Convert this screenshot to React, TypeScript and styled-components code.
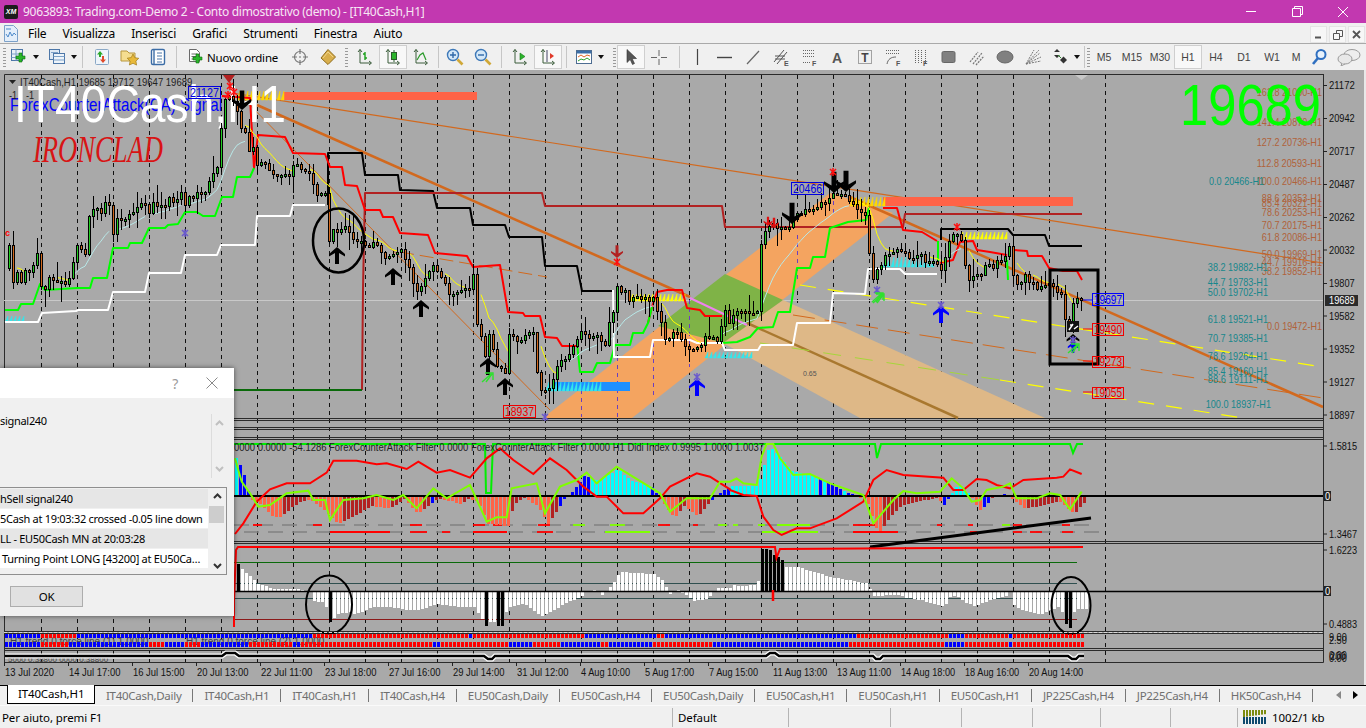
import React from "react";
import styled, { createGlobalStyle } from "styled-components";

const Global = createGlobalStyle`
  html, body { margin: 0; padding: 0; width: 1366px; height: 728px; overflow: hidden; background: #f0f0f0; }
  body { font-family: "Noto Sans", "Liberation Sans", sans-serif; font-size: 12px; color: #000; }
`;
const CH = `"Liberation Sans", Arial, sans-serif`;

const Shell = styled.div`position: relative; width: 1366px; height: 728px; display: flex; flex-direction: column; overflow: hidden;`;
const TitleBar = styled.div`height: 23px; background: #c238b0; display: flex; align-items: center; color: #fff; flex: none;`;
const Logo = styled.div`width: 14px; height: 14px; margin: 0 5px 0 4px; background: #1c1c1c; border-radius: 2px; color: #fff; font: italic bold 7px/14px ${CH}; text-align: center;`;
const TitleText = styled.div`font-size: 12px; letter-spacing: -0.3px; color: #f7e6f4; flex: 1; white-space: nowrap;`;
const WinBtn = styled.div`width: 46px; height: 23px; display: flex; align-items: center; justify-content: center;`;
const MenuBar = styled.div`height: 20px; background: #f0f0f0; display: flex; align-items: center; flex: none; padding-left: 4px; position: relative;`;
const MenuItems = styled.div`display: flex; gap: 16.2px; margin-left: 10px; font-size: 12px; letter-spacing: -0.2px; flex: 1;`;
const MdiBtns = styled.div`display: flex; gap: 2px; margin-right: 1px; align-self: flex-end;`;
const MdiBtn = styled.div`width: 17px; height: 17px; background: #f7f7f7; border: 1px solid #e4e4e4; box-sizing: border-box; display: flex; align-items: center; justify-content: center;`;
const ToolBar = styled.div`height: 27px; background: #f0f0f0; border-top: 1px solid #a9a9a9; box-sizing: border-box; display: flex; align-items: center; padding-left: 3px; flex: none;`;
const Grip = styled.div<{ $ml?: number }>`width: 3px; height: 19px; margin-left: ${p => p.$ml ?? 0}px; background: repeating-linear-gradient(to bottom, #9a9a9a 0 1px, transparent 1px 3px);`;
const Sep = styled.div<{ $ml: number; $mr: number }>`width: 1px; height: 22px; background: #c6c6c6; margin: 0 ${p => p.$mr}px 0 ${p => p.$ml}px;`;
const Tool = styled.div<{ $w: number; $active?: boolean; $ml?: number }>`
  width: ${p => p.$w}px; height: 24px; margin-left: ${p => p.$ml ?? 0}px; box-sizing: border-box; flex: none;
  display: flex; align-items: center; justify-content: center; gap: 5px; white-space: nowrap;
  border: 1px solid ${p => (p.$active ? "#cfcfcf" : "transparent")};
  background: ${p => (p.$active ? "#f8f8f8" : "transparent")};
`;
const OrderBtn = styled(Tool)`justify-content: flex-start; padding-left: 1px; gap: 2px; font-size: 11.5px; letter-spacing: -0.2px;`;
const Period = styled(Tool)`font: 10.5px ${CH}; color: #444;`;
const Caret = styled.div`width: 0; height: 0; border: 3.5px solid transparent; border-top: 4px solid #111; border-bottom: 0;`;

const ChartArea = styled.div`height: 615px; background: #a9a9a9; flex: none; border-right: 2px solid #e8e8e8; box-sizing: border-box;`;
const ChartSvg = styled.svg`display: block; width: 1364px; height: 615px;`;

const TabBar = styled.div`height: 21px; border-top: 1px solid #000; box-sizing: border-box; background: #f0f0f0; display: flex; align-items: center; padding-left: 7px; flex: none; position: relative; font-size: 11.5px; border-bottom: 1px solid #fafafa;`;
const ActiveTab = styled.div`height: 19px; margin-top: -1px; align-self: flex-start; box-sizing: border-box; padding: 0 10px; width: 88px; background: #fff; border: 1px solid #000; border-top: 0; line-height: 17px; white-space: nowrap; letter-spacing: -0.15px;`;
const Tab = styled.div`padding: 0 11px; height: 13px; line-height: 13px; color: #6f6f6f; border-right: 1px solid #777; letter-spacing: -0.29px; white-space: nowrap;`;
const TabArrows = styled.div`position: absolute; right: 8px; top: 5px; display: flex; gap: 12px;`;
const TabArrow = styled.div<{ $dir: string; $on?: boolean }>`width: 0; height: 0; border: 4px solid transparent; border-${p => p.$dir}: 0; border-${p => (p.$dir === "left" ? "right" : "left")}: 5px solid ${p => (p.$on ? "#000" : "#888")};`;

const StatusBar = styled.div`height: 22px; background: #f0f0f0; display: flex; align-items: center; flex: none; font-size: 11.5px; letter-spacing: -0.1px;`;
const Cell = styled.div<{ $w: number }>`width: ${p => p.$w}px; height: 19px; line-height: 19px; padding-left: 5px; box-sizing: border-box; flex: none; border-left: 1px solid #b4b4b4; white-space: nowrap; display: flex; align-items: center; gap: 5px;`;
const HelpCell = styled(Cell)`border-left: 0; padding-left: 2px;`;

const Dialog = styled.div`position: absolute; left: 0; top: 368px; width: 234px; height: 248px; background: #f0f0f0; box-shadow: 0 0 5px rgba(0,0,0,.55); font-size: 11px; letter-spacing: -0.3px; overflow: hidden; display: flex; flex-direction: column;`;
const DlgTitle = styled.div`height: 30px; background: #fff; color: #8c8c8c; display: flex; justify-content: flex-end; align-items: center; flex: none; gap: 28px; padding-right: 16px;`;
const QMark = styled.div`font-size: 14px; color: #9a9a9a;`;
const DlgText = styled.div`height: 65px; margin-top: 16px; display: flex; justify-content: space-between; flex: none; box-sizing: border-box; line-height: 14px;`;
const MiniScroll = styled.div`width: 23px; border-left: 1px solid #dcdcdc; display: flex; flex-direction: column; justify-content: space-between; align-items: center; padding: 6px 8px 6px 0; box-sizing: border-box; height: 64px;`;
const ListBox = styled.div`margin-top: 8px; width: 227px; height: 88px; box-sizing: border-box; border: 1px solid #8f8f8f; border-left: 0; background: #f0f0f0; display: flex; flex: none;`;
const Rows = styled.div`width: 208px; padding-top: 1px; overflow: hidden;`;
const Row = styled.div<{ $alt?: boolean; $shift?: number }>`height: 19px; margin-bottom: 1px; line-height: 19px; padding-left: ${p => p.$shift ?? 0}px; white-space: nowrap; background: ${p => (p.$alt ? "#e6e6e6" : "#fff")}; overflow: hidden;`;
const ListScroll = styled.div`flex: 1; display: flex; flex-direction: column; align-items: center; justify-content: space-between; padding: 5px 0; box-sizing: border-box; position: relative;`;
const Thumb = styled.div`position: absolute; left: 1px; right: 2px; top: 18px; height: 17px; background: #cdcdcd;`;
const OkButton = styled.div`margin: 11px 0 0 10px; width: 73px; height: 21px; line-height: 19px; box-sizing: border-box; background: #e1e1e1; border: 1px solid #adadad; text-align: center; font-size: 11.5px;`;

/* ---------- data helpers ---------- */
type P = [number, number];
const lerp = (pts: P[], x: number) => {
  if (x <= pts[0][0]) return pts[0][1];
  for (let i = 1; i < pts.length; i++) {
    if (x <= pts[i][0]) {
      const [a, b] = pts[i - 1];
      const [c, d] = pts[i];
      return b + ((d - b) * (x - a)) / (c - a || 1);
    }
  }
  return pts[pts.length - 1][1];
};
let seed = 91;
const rnd = () => {
  seed = (seed * 1664525 + 1013904223) % 4294967296;
  return seed / 4294967296;
};
const pl = (pts: P[]) => pts.map(p => p.join(",")).join(" ");
const zoom = (ox: number, oy: number, arr: P[]): P[] => arr.map(([a, b]) => [ox + a / 3, oy + b / 3]);

const K: P[] = [[5,270],[9,245],[13,285],[17,275],[21,285],[25,270],[29,272],[33,268],[37,252],[41,285],[45,292],[49,280],[53,280],[57,282],[61,280],[65,282],[69,278],[77,245],[81,250],[85,255],[89,215],[93,210],[97,207],[101,212],[105,203],[109,205],[113,235],[117,220],[121,222],[125,218],[133,215],[137,207],[141,205],[145,204],[149,213],[153,200],[157,205],[161,203],[165,204],[169,200],[173,202],[177,200],[181,195],[185,208],[189,198],[193,196],[197,193],[201,193],[205,192],[212,175],[218,165],[221,130],[225,102],[229,98],[233,100],[238,112],[241,130],[245,135],[249,150],[253,150],[257,165],[265,165],[270,172],[280,178],[290,175],[295,160],[302,170],[310,175],[315,195],[325,195],[329,240],[333,228],[337,232],[345,228],[350,235],[355,242],[365,245],[375,245],[385,260],[392,255],[400,250],[405,258],[410,268],[414,285],[418,295],[422,283],[433,267],[442,280],[450,295],[457,295],[470,288],[473,273],[477,322],[481,336],[485,355],[489,337],[493,352],[497,368],[505,372],[509,335],[517,340],[525,335],[533,333],[537,370],[541,392],[549,390],[553,378],[561,360],[569,355],[581,330],[589,340],[597,336],[605,345],[610,320],[613,313],[617,288],[621,295],[625,293],[630,300],[640,297],[645,300],[653,298],[657,310],[665,338],[669,340],[673,330],[681,340],[689,352],[697,347],[709,335],[717,340],[725,310],[729,322],[733,315],[741,312],[749,311],[757,312],[761,245],[765,232],[773,225],[781,228],[789,228],[797,215],[805,212],[817,205],[825,203],[833,195],[841,196],[849,200],[855,205],[865,215],[869,255],[873,277],[877,268],[881,264],[885,258],[889,253],[897,252],[905,252],[909,257],[913,259],[917,256],[921,257],[925,262],[937,263],[941,272],[945,257],[949,241],[953,234],[957,235],[961,243],[965,267],[969,279],[973,278],[977,276],[981,275],[985,263],[989,265],[993,266],[997,263],[1001,260],[1005,257],[1009,246],[1013,275],[1017,282],[1021,285],[1025,276],[1029,285],[1033,285],[1037,290],[1041,288],[1045,286],[1053,285],[1057,290],[1061,297],[1065,317],[1069,325],[1073,303],[1077,301],[1081,299]];

const closes: { x: number; c: number }[] = [];
for (let x = 5; x <= 1081; x += 4) closes.push({ x, c: lerp(K, x) + (rnd() - 0.5) * 5.5 });

const ema = (n: number) => {
  const a = 2 / (n + 1);
  let v = closes[0].c;
  return closes.map(d => (v = v + a * (d.c - v)));
};
const fast = ema(7);
const slow = ema(13);
const segs = (vals: number[], test: (v: number, c: number) => boolean, shift: number) => {
  const out: string[] = [];
  let cur: string[] = [];
  vals.forEach((v, i) => {
    const c = closes[i].c;
    if (test(v, c)) cur.push(`${closes[i].x + shift},${v.toFixed(1)}`);
    else {
      if (cur.length > 2) out.push(cur.join(" "));
      cur = [];
    }
  });
  if (cur.length > 2) out.push(cur.join(" "));
  return out;
};

const WHITE: P[][] = [
  [[5,322],[38,322],[42,313],[76,311],[78,310],[108,310],[113,292],[145,292],[149,273],[181,273],[185,255],[217,255],[221,245],[255,245],[257,216],[290,216],[293,205],[325,205]],
  [[613,290],[614,357],[650,357],[653,340],[690,340],[697,343],[722,343],[725,350],[758,350],[761,345],[793,345],[797,323],[830,323],[833,293],[865,294],[868,269],[900,269],[905,274],[937,274]],
];
const GREEN: P[][] = [
  [[5,310],[18,310],[21,304],[33,304],[40,284],[45,290],[77,288],[90,288],[93,278],[107,278],[113,248],[128,248],[130,243],[142,243],[149,228],[165,228],[168,225],[178,224],[185,212],[197,212],[203,216],[215,216],[222,197],[233,197],[237,177],[250,177],[254,168]],
  [[577,343],[580,372],[593,372],[597,363],[610,363],[615,345],[630,345],[633,333],[643,333],[648,323],[652,307]],
  [[722,343],[737,342],[750,337],[758,328],[773,327],[778,312],[790,312],[797,268],[810,268],[813,257],[825,257],[830,228],[848,222],[866,220],[869,207]],
  [[938,241],[938,263]],[[1007,260],[1008,280]],
];
const RED: P[][] = [
  [[222,96],[250,98],[254,168],[258,135],[285,137],[293,153],[325,154],[330,167],[342,167],[345,185],[357,186],[365,210],[380,210],[383,217],[393,217],[400,233],[428,235],[435,253],[467,256],[473,267],[500,265],[508,312],[523,313],[525,316],[540,316],[545,337],[557,338],[562,346],[577,346]],
  [[648,323],[652,307],[657,292],[667,290],[682,290],[687,308],[700,310],[705,316],[722,316]],
  [[883,208],[897,208],[903,230],[922,232],[937,241]],[[940,263],[953,260],[960,242],[973,241],[977,250],[990,252],[1007,255]],[[1013,250],[1027,251],[1028,256],[1042,256],[1049,268],[1063,271],[1077,271],[1082,280]],
];
const BLACK: P[][] = [
  [[328,205],[328,153],[362,153],[365,175],[398,175],[400,190],[433,191],[437,208],[470,208],[473,225],[505,225],[509,237],[542,237],[545,266],[577,266],[582,291],[613,291]],
  [[941,240],[941,229],[1008,229],[1013,235],[1045,235],[1049,246],[1082,246]],
];
const DRED: P[] = [[362,390],[363,288],[365,193],[542,193],[545,206],[722,206],[725,227],[903,227],[905,214],[1082,214]];

const HIST1: P[] = [[235,38],[242,25],[245,12],[248,2],[250,-3],[260,-8],[270,-20],[278,-22],[290,-12],[300,-5],[310,-4],[318,-10],[327,-18],[337,-28],[343,-25],[357,-18],[370,-10],[387,-12],[393,-10],[403,-3],[417,-18],[430,-8],[437,-3],[450,-5],[460,-8],[467,-3],[477,-5],[487,-28],[507,-30],[513,-8],[523,-2],[537,-10],[547,-28],[558,-12],[563,-3],[573,6],[583,20],[597,15],[617,27],[630,15],[650,10],[657,0],[673,-22],[683,-10],[697,-20],[710,-5],[720,4],[730,10],[757,10],[760,20],[768,50],[778,40],[790,25],[810,20],[827,14],[843,5],[853,1],[860,-3],[867,-8],[877,-38],[890,-20],[900,-10],[917,-5],[937,-2],[942,-10],[945,-6],[957,12],[970,0],[978,-15],[987,-7],[993,0],[1005,3],[1017,-8],[1023,-12],[1040,-10],[1058,-5],[1073,-18],[1082,-7]];
const BLUE_RANGES: P[] = [[238,248],[431,434],[559,564],[571,585],[587,590],[652,656],[711,728],[819,823],[827,832],[835,840],[846,852],[943,948],[984,988],[1001,1005]];
const H1RED = [...zoom(230,430,[[15,312],[40,280],[80,215],[120,178],[170,160],[240,160],[290,128],[310,92],[380,92],[440,103],[470,100],[530,117],[565,95],[620,128],[660,120],[720,143],[770,85],[810,55],[850,90],[910,132],[960,85],[1010,120],[1060,170],[1100,200],[1130,200],[1180,250],[1240,250],[1290,205],[1320,170],[1400,130],[1440,140],[1500,178]]),
  ...zoom(730,430,[[0,180],[40,195],[80,198],[100,260],[130,300],[155,315],[200,295],[240,295],[320,265],[400,215],[430,150],[470,120],[520,135],[640,143],[670,180],[700,180],[740,147],[770,150],[800,165],[840,175],[880,150],[980,143],[1000,140],[1020,118],[1055,132]])];
const H1LIME = [...zoom(230,430,[[15,85],[35,155],[60,190],[85,230],[120,225],[170,190],[235,182],[250,210],[285,210],[300,270],[340,210],[400,205],[440,195],[490,210],[520,195],[560,235],[610,175],[650,205],[720,165],[770,275],[800,262],[830,262],[845,175],[920,160],[945,250],[990,170],[1040,150],[1070,128],[1100,160],[1160,110],[1290,190],[1320,245],[1370,205],[1440,205],[1470,155],[1500,155]]),
  ...zoom(730,430,[[0,155],[20,145],[40,160],[80,165],[95,80],[110,42],[130,42],[150,85],[190,135],[240,132],[300,160],[400,195],[430,280],[490,210],[520,183],[560,190],[630,185],[665,145],[700,175],[725,215],[750,210],[770,180],[820,170],[840,160],[860,205],[920,205],[960,190],[990,195],[1020,238],[1055,185]])];

const HIST2: P[] = [...zoom(230,0,[[15,90],[40,60],[60,45],[80,24],[110,18],[120,9],[200,9],[240,0],[250,-30],[280,-30],[300,-90],[320,-66],[360,-60],[370,-66],[390,-60],[420,-45],[480,-45],[530,-54],[560,-54],[620,-36],[680,-45],[730,-45],[760,-90],[800,-90],[815,-90],[830,-45],[880,-36],[930,-72],[960,-60],[1010,-30],[1050,-15],[1060,0],[1075,3],[1090,6],[1115,-9],[1130,9],[1150,30],[1165,60],[1270,54],[1300,30],[1310,0],[1320,-9],[1335,12],[1350,0],[1390,-27],[1430,-21],[1460,12],[1500,12]]),
  ...zoom(730,0,[[0,24],[20,18],[80,21],[90,129],[105,129],[118,126],[130,111],[155,96],[165,75],[200,75],[300,45],[400,27],[410,27],[425,-12],[500,-9],[530,-18],[570,-24],[640,-45],[660,-9],[680,-15],[700,-30],[730,-42],[760,-30],[780,-24],[830,-9],[840,6],[850,-45],[890,-60],[930,-66],[980,-45],[1000,-66],[1005,-96],[1018,-108],[1030,-54],[1045,-51]])];
const BLACKBARS = [237, 329, 485, 497, 501, 761, 765, 769, 773, 777, 781, 1065, 1069];

const ROW1: [number, number, string][] = [[5,41,"b"],[41,77,"r"],[77,311,"b"],[311,469,"r"],[469,473,"b"],[473,584,"r"],[584,654,"b"],[654,664,"r"],[664,855,"b"],[855,947,"r"],[947,963,"b"],[963,1008,"r"],[1008,1012,"b"],[1012,1084,"r"]];
const ROW2: [number, number, string][] = [[5,41,"b"],[41,68,"r"],[68,147,"b"],[147,165,"r"],[165,184,"b"],[184,199,"r"],[199,248,"b"],[248,292,"r"],[292,299,"b"],[299,432,"r"],[432,438,"b"],[438,507,"r"],[507,532,"b"],[532,559,"r"],[559,599,"b"],[599,607,"r"],[607,650,"b"],[650,712,"r"],[712,848,"b"],[848,943,"r"],[943,964,"b"],[964,1008,"r"],[1008,1012,"b"],[1012,1084,"r"]];
const rowColor = (row: [number, number, string][], x: number) => (row.find(r => x >= r[0] && x < r[1])?.[2] === "b" ? "#0000ff" : "#ff0000");

const GRID = [41,77,113,149,185,221,257,293,329,365,401,437,473,509,545,581,617,653,689,725,761,797,833,869,905,941,977,1013,1049,1105];
const AXIS: [string, number][] = [["21172",85.5],["20942",118.5],["20717",151.5],["20487",184.5],["20262",217.5],["20032",250],["19807",283.5],["19582",316],["19352",349],["19127",382],["18897",415]];
const TIMES: [string, number][] = [["13 Jul 2020",5],["14 Jul 17:00",69],["16 Jul 15:00",133],["20 Jul 13:00",197],["22 Jul 11:00",261],["23 Jul 18:00",325],["27 Jul 16:00",389],["29 Jul 14:00",453],["31 Jul 12:00",517],["4 Aug 10:00",581],["5 Aug 17:00",645],["7 Aug 15:00",709],["11 Aug 13:00",773],["13 Aug 11:00",837],["14 Aug 18:00",901],["18 Aug 16:00",965],["20 Aug 14:00",1029]];
const FIB_R: [string, number][] = [["161.8 21090-H1",92],["141.4 20870-H1",122],["127.2 20736-H1",142],["112.8 20593-H1",163],["100.0 20466-H1",181],["88.6 20353-H1",198],["85.4 20321-H1",203],["78.6 20253-H1",212],["70.7 20175-H1",225],["61.8 20086-H1",237.5],["50.0 19969-H1",254],["44.7 19916-H1",262],["38.2 19852-H1",271.6],["0.0 19472-H1",326]];
const FIB_L: [string, number, number][] = [["0.0 20466-H1",181,1264],["38.2 19882-H1",267,1268],["44.7 19783-H1",282,1268],["50.0 19702-H1",292.6,1268],["61.8 19521-H1",319.5,1268],["70.7 19385-H1",338,1268],["78.6 19264-H1",356.6,1268],["85.4 19160-H1",371,1268],["88.6 19111-H1",379,1268],["100.0 18937-H1",404,1271]];

const tw = (s: string) => {
  let w = 0;
  for (const c of s) {
    if (/[0-9]/.test(c)) w += 5.15;
    else if (c === "." || c === ":" || c === ",") w += 2.3;
    else if (c === " ") w += 2.5;
    else if (c === "-") w += 3;
    else if (/[A-Z]/.test(c)) w += 6;
    else if (c === "l" || c === "i") w += 2.2;
    else w += 5;
  }
  return w;
};

const T: React.FC<{ x: number; y: number; s: string; fill?: string; anchor?: string }> = ({ x, y, s, fill = "#111", anchor }) => (
  <text x={x} y={y + 3.5} fontSize={10.4} fontFamily={CH} fill={fill} textAnchor={anchor as any} textLength={tw(s)} lengthAdjust="spacingAndGlyphs">{s}</text>
);
const Hatch: React.FC<{ x: number; y: number; w: number; h: number; c: string }> = ({ x, y, w, h, c }) => {
  let d = "";
  for (let i = x; i < x + w; i += 4) d += `M${i} ${y + h}L${i + 3} ${y}L${i + 3} ${y + h}Z`;
  return <path d={d} fill={c} stroke={c} strokeWidth={0.5} />;
};
const UpArrow: React.FC<{ x: number; y: number; c?: string; s?: number; down?: boolean }> = ({ x, y, c = "#000", s = 1, down }) => (
  <g transform={`translate(${x} ${y}) scale(${s} ${down ? -s : s})`} fill={c}>
    <path d="M0 0 L8 7 L8 9.5 L2 6 L2 17 L-2 17 L-2 6 L-8 9.5 L-8 7 Z" />
  </g>
);
const Star: React.FC<{ x: number; y: number; c?: string }> = ({ x, y, c = "#6a5acd" }) => (
  <path d={`M${x - 3} ${y - 3}L${x + 3} ${y + 3}M${x + 3} ${y - 3}L${x - 3} ${y + 3}M${x} ${y - 4}V${y + 4}`} stroke={c} strokeWidth={1.5} />
);
const GreenArrow: React.FC<{ x: number; y: number }> = ({ x, y }) => (
  <path d={`M${x - 5} ${y + 6}L${x + 4} ${y - 2}M${x - 1} ${y + 6}L${x + 5} ${y - 2}M${x - 2} ${y - 3}H${x + 6}V${y + 4}`} stroke="#2fe02f" strokeWidth={1.4} fill="none" />
);
const Tag: React.FC<{ x: number; y: number; w: number; h: number; s: string; c: string }> = ({ x, y, w, h, s, c }) => (
  <g>
    <rect x={x + 0.5} y={y + 0.5} width={w} height={h} fill="none" stroke={c} />
    <text x={x + 2} y={y + h - 1.5} fontSize={13.5} fontFamily={CH} fill={c} textLength={w - 3} lengthAdjust="spacingAndGlyphs">{s}</text>
  </g>
);
const Line: React.FC<{ pts: P[]; c: string; w?: number; dash?: string }> = ({ pts, c, w = 2, dash }) => (
  <polyline points={pl(pts)} fill="none" stroke={c} strokeWidth={w} strokeDasharray={dash} strokeLinejoin="round" />
);

const dashGrey = () => {
  const out: React.ReactNode[] = [];
  for (const y of [525, 532]) for (let x = 234; x < 1083; x += 24) out.push(<line key={y + "-" + x} x1={x + (y === 525 ? 0 : 10)} x2={x + (y === 525 ? 15 : 25)} y1={y} y2={y} stroke="#858585" strokeWidth={1.6} />);
  return out;
};
const DASH_COL: [number, number, number, string][] = [
  [525,253,262,"#f00"],[525,313,322,"#f00"],[525,410,422,"#f00"],[525,473,485,"#f00"],[525,493,502,"#f00"],[525,538,550,"#f00"],[525,573,585,"#7fff00"],[525,610,625,"#7fff00"],[525,658,670,"#f00"],[525,693,698,"#f00"],[525,718,727,"#7fff00"],[525,733,738,"#7fff00"],[525,758,765,"#7fff00"],[525,777,810,"#7fff00"],[525,853,877,"#f00"],[525,937,942,"#f00"],[525,968,973,"#f00"],[525,1002,1010,"#7fff00"],[525,1013,1022,"#f00"],[525,1062,1070,"#f00"],
  [532,330,390,"#f00"],[532,410,427,"#f00"],[532,442,450,"#f00"],[532,473,507,"#f00"],[532,537,553,"#f00"],[532,605,650,"#7fff00"],[532,762,818,"#7fff00"],[532,853,898,"#f00"],[532,970,977,"#f00"],[532,1013,1022,"#f00"],[532,1030,1042,"#f00"],[532,1062,1073,"#f00"],
];
const NOTCH = "5,656 222,656 226,653 235,653 239,656 484,656 488,659 492,659 495,656 766,656 770,653 775,653 779,656 873,656 876,659 880,659 883,656 1068,656 1072,659 1076,659 1079,656 1084,656";

const Chart: React.FC = () => (
  <ChartSvg viewBox="0 70 1364 615">
    {GRID.map(x => <line key={x} x1={x + 0.5} x2={x + 0.5} y1={75} y2={662} stroke="#111" strokeDasharray="4 4" />)}
    <g fill="none" stroke="#2b2b2b">
      <path d="M4.5 74.5H1323.5V662.5H4.5Z" />
      <path d="M4 418.5H1323M4 420.5H1323M4 427.5H1323M4 429.5H1323M4 437.5H1323M4 439.5H1323M4 541.5H1323M4 543.5H1323M4 631.5H1323M4 633.5H1323M4 648.5H1323M4 650.5H1323" />
    </g>
    <line x1={4} x2={1323} y1={300.5} y2={300.5} stroke="#c9c9c9" />

    <polygon points="543,418 830,193 893,213 632,418" fill="#f4a460" />
    <polygon points="783,300 1045,418 860,418 723,343" fill="#deb887" />
    <polygon points="658,326 725,274 783,300 723,343" fill="#7fb347" />
    <Line pts={[[747,323],[958,418]]} c="#a9782f" w={2.5} />
    <Line pts={[[232,93],[1323,263]]} c="#d2691e" w={1.2} />
    <Line pts={[[400,252],[547,277]]} c="#d2691e" w={1} dash="14 6" />
    <Line pts={[[793,315],[1323,398]]} c="#d2691e" w={1} dash="22 10" />
    <Line pts={[[800,285],[1323,367]]} c="#ffff00" w={1.2} dash="16 12" />
    <Line pts={[[760,343],[1000,380]]} c="#a6d63a" w={1} dash="18 14" />
    <Line pts={[[1000,380],[1243,418]]} c="#ffff00" w={1.2} dash="16 12" />
    <Line pts={[[240,95],[550,410]]} c="#d2691e" w={1} />
    <Line pts={[[690,298],[747,325]]} c="#ee82ee" w={2} />
    <Line pts={[[257,105],[690,297]]} c="#d2691e" w={2.6} />
    <Line pts={[[850,197],[1323,407]]} c="#d2691e" w={2.6} />
    {[[581,390,417],[617,357,417],[653,343,397],[689,300,367],[797,235,280],[833,193,217],[869,207,230]].map(([x,a,b]) => (
      <line key={x} x1={x + 0.5} x2={x + 0.5} y1={a} y2={b} stroke="#6a3fc0" strokeDasharray="4 4" />
    ))}
    <text x={803} y={376} fontSize={7} fontFamily={CH} fill="#555">0.65</text>

    <rect x={283} y={92} width={194} height={8} fill="#ff6347" />
    <rect x={883} y={197} width={190} height={9} fill="#ff6347" />
    <rect x={555} y={382} width={75} height={9} fill="#1e90ff" />
    <Hatch x={237} y={91} w={46} h={9} c="#ffd700" />
    <Hatch x={850} y={197} w={34} h={9} c="#ffd700" />
    <Hatch x={630} y={294} w={55} h={7} c="#ffff00" />
    <Hatch x={960} y={232} w={48} h={7} c="#ffff00" />
    <Hatch x={546} y={382} w={54} h={9} c="#35e6ea" />
    <Hatch x={705} y={352} w={47} h={6} c="#35e6ea" />
    <Hatch x={883} y={257} w={52} h={10} c="#35e6ea" />
    <Hatch x={5} y={316} w={20} h={6} c="#35e6ea" />

    {BLACK.map((p, i) => <Line key={i} pts={p} c="#000" />)}
    <Line pts={DRED} c="#b22222" />
    <Line pts={[[5,390],[362,390]]} c="#0a6a0a" />
    {RED.map((p, i) => <Line key={i} pts={p} c="#ff0000" />)}
    {GREEN.map((p, i) => <Line key={i} pts={p} c="#00ff00" />)}
    {WHITE.map((p, i) => <Line key={i} pts={p} c="#fff" />)}

    {segs(slow, (v, c) => v > c + 3, 0).map((s, i) => <polyline key={i} points={s} fill="none" stroke="#b8e8e8" />)}
    {segs(fast, (v, c) => v < c - 2, 4).map((s, i) => <polyline key={i} points={s} fill="none" stroke="#ffff00" />)}

    <text x={10} y={111} fontSize={18.5} fontFamily={CH} fill="#0000ff" textLength={212} lengthAdjust="spacingAndGlyphs">ForexCounterAttack(CA) Signal</text>
    <text x={14} y={122} fontSize={52} fontFamily={CH} fill="#fff" textLength={272} lengthAdjust="spacingAndGlyphs">IT40Cash,H1</text>

    {closes.map((d, i) => {
      if (i === 0) return null;
      const o = closes[i - 1].c;
      const top = Math.min(o, d.c);
      const bot = Math.max(o, d.c);
      const hi = top - 1 - rnd() * rnd() * 20;
      const lo = bot + 1 + rnd() * rnd() * 20;
      const h = Math.max(bot - top, 2);
      return (
        <g key={d.x} shapeRendering="crispEdges">
          <line x1={d.x + 0.5} x2={d.x + 0.5} y1={hi} y2={lo} stroke="#000" />
          <rect x={d.x - 0.5} y={top} width={2} height={h} fill={d.c < o ? "#22cc22" : "#d2691e"} stroke="#000" />
        </g>
      );
    })}

    {([[337,247],[393,268],[421,300],[488,358],[505,378]] as P[]).map(([x,y]) => <UpArrow key={x} x={x} y={y} />)}
    {([[697,379],[941,306]] as P[]).map(([x,y]) => <UpArrow key={x} x={x} y={y} c="#0000ff" />)}
    <UpArrow x={1073} y={334} s={0.8} />
    <UpArrow x={1073} y={342} s={0.65} c="#0000ff" />
    <UpArrow x={792} y={224} s={1.25} down />
    <UpArrow x={834} y={193} s={1.25} down />
    <UpArrow x={846} y={192} s={1.25} down />
    <UpArrow x={242} y={110} s={1.15} down />
    <UpArrow x={617} y={258} s={0.75} c="#b22222" down />
    <UpArrow x={774} y={228} s={0.6} c="#e01010" down />
    <UpArrow x={768} y={226} s={0.55} c="#e01010" down />
    <path d="M223 75H235L229 83Z" fill="#b22222" />
    {([[230,86],[228,95],[234,92],[617,262],[833,172],[957,227]] as P[]).map(([x,y],i) => <Star key={i} x={x} y={y} c="#ff1010" />)}
    {([[185,233],[877,290],[697,377],[545,417],[941,305],[1073,340]] as P[]).map(([x,y],i) => <Star key={i} x={x} y={y} />)}
    {([[487,376],[877,296],[878,297],[1073,347]] as P[]).map(([x,y],i) => <GreenArrow key={i} x={x} y={y} />)}
    <rect x={1067} y={321} width={12} height={11} fill="#111" />
    <path d="M1069 330L1073 324M1074 329L1078 326M1070 325H1073" stroke="#fff" strokeWidth={1.5} />
    <text x={5} y={236} fontSize={9} fill="#f00" fontFamily={CH} fontWeight="bold">c</text>

    <ellipse cx={338.5} cy={240.5} rx={25.5} ry={32} fill="none" stroke="#000" strokeWidth={2.5} />
    <rect x={1050} y={270} width={48} height={94} fill="none" stroke="#000" strokeWidth={3} />
    <path d="M1083 300H1092" stroke="#00f" />
    <path d="M1083 329H1092M1083 361H1092M1083 392H1092" stroke="#f00" />

    <Tag x={1092} y={293} w={31} h={12} s="19697" c="#0000ff" />
    <Tag x={1092} y={323} w={31} h={12} s="19490" c="#f00000" />
    <Tag x={1092} y={356} w={31} h={11} s="19273" c="#f00000" />
    <Tag x={1092} y={387} w={31} h={11} s="19055" c="#f00000" />
    <Tag x={503} y={405} w={32} h={12} s="18937" c="#f00000" />
    <Tag x={791} y={182} w={32} h={12} s="20466" c="#0000e0" />
    <Tag x={188} y={86} w={32} h={12} s="21127" c="#0000e0" />

    {FIB_R.map(([s, y]) => <T key={s} x={1322} y={y} s={s} fill="#b0623a" anchor="end" />)}
    {FIB_L.map(([s, y, x]) => <T key={s} x={x} y={y} s={s} fill="#17878c" anchor="end" />)}

    <path d="M9 80H16L12.5 84Z" fill="#222" />
    <T x={20} y={82} s="IT40Cash,H1  19685 19712 19647 19689" fill="#222" />
    <T x={9} y={95} s="-1" fill="#222" />
    <T x={26} y={95} s="-1" fill="#222" />
    <text x={1180} y={125} fontSize={58} fontFamily={CH} fill="#00ff00" textLength={141} lengthAdjust="spacingAndGlyphs">19689</text>
    <text x={33} y={162} fontSize={37} fontFamily={`"Liberation Serif", serif`} fontStyle="italic" fill="#d81414" textLength={130} lengthAdjust="spacingAndGlyphs">IRONCLAD</text>

    {dashGrey()}
    {DASH_COL.map(([y,a,b,c],i) => <line key={i} x1={a} x2={b} y1={y} y2={y} stroke={c} strokeWidth={1.8} />)}
    {Array.from({ length: 213 }, (_, i) => {
      const x = 235 + i * 4;
      const v = lerp(HIST1, x);
      const prev = lerp(HIST1, x - 4);
      const pos = v >= 0;
      const blue = BLUE_RANGES.some(([a, b]) => x + 1 >= a && x + 1 <= b);
      const col = blue ? "#0000ff" : pos ? "#00ffff" : v <= prev + 0.4 ? "#ff6347" : "#b22222";
      return <rect key={x} x={x} y={pos ? 496 - v : 496} width={3} height={Math.abs(v)} fill={col} shapeRendering="crispEdges" />;
    })}
    <line x1={234} x2={1323} y1={496} y2={496} stroke="#000" strokeWidth={2} />
    <polyline points={pl([[234,444],[483,444],[485,444],[486,493],[491,493],[493,444],[875,444],[877,458],[881,444],[1070,444],[1073,453],[1077,444],[1083,444]])} fill="none" stroke="#00ee00" strokeWidth={2} />
    <polyline points={pl(H1RED)} fill="none" stroke="#f00" strokeWidth={2} />
    <polyline points={pl(H1LIME)} fill="none" stroke="#7fff00" strokeWidth={2} />
    <Line pts={[[870,547],[1091,518]]} c="#000" w={3} />
    <text x={234} y={451} fontSize={10.4} fontFamily={CH} fill="#222" textLength={530} lengthAdjust="spacingAndGlyphs">0000 0.0000 -54.1286  ForexCounterAttack Filter 0.0000  ForexCounterAttack Filter 0.0000  H1 Didi Index 0.9995 1.0000 1.0037</text>

    <path d="M234 562.5H1077" stroke="#0a6a0a" />
    <path d="M234 583.5H1077M234 598.5H1077" stroke="#2f4f4f" />
    <path d="M234 619.5H1077" stroke="#8b1a1a" />
    {Array.from({ length: 213 }, (_, i) => {
      const x = 237 + i * 4;
      const k = BLACKBARS.includes(x);
      const v = x === 237 ? 28 : lerp(HIST2, x);
      const val = k && x === 329 ? -30 : v + (k && (x === 485 || x === 497 || x === 501) ? -4 : 0);
      return <rect key={x} x={x} y={val > 0 ? 592 - val : 592} width={3} height={Math.abs(val)} fill={k ? "#000" : "#fff"} shapeRendering="crispEdges" />;
    })}
    <line x1={234} x2={1323} y1={591.5} y2={591.5} stroke="#000" strokeWidth={1.6} />
    <polyline points="234,627 234,600 236,550 238,547 770,547 775,547 776.5,558 780,549 1083,547" fill="none" stroke="#f00" strokeWidth={2} />
    <line x1={773} x2={773} y1={590} y2={601} stroke="#f00" strokeWidth={2.5} />
    <ellipse cx={329} cy={604.5} rx={23} ry={29} fill="none" stroke="#000" strokeWidth={2} />
    <ellipse cx={1071} cy={605.5} rx={19.5} ry={28.5} fill="none" stroke="#000" strokeWidth={2} />
    <path d="M4 632.5H1323" stroke="#d8d8d8" strokeDasharray="3 2" />

    <text x={10} y={645} fontSize={10} fontFamily={CH} fill="#444">H1 trend 0 force line (1) 1.0000</text>
    <text x={186} y={645} fontSize={10} fontFamily={CH} fill="#444">H1 trend 0 force line (2) 1.0000</text>
    {Array.from({ length: 270 }, (_, i) => {
      const x = 5 + i * 4;
      return (
        <g key={x} shapeRendering="crispEdges">
          <rect x={x} y={634} width={3} height={4} fill={rowColor(ROW1, x)} />
          <rect x={x} y={642} width={3} height={5} fill={rowColor(ROW2, x)} />
        </g>
      );
    })}

    <text x={8} y={662} fontSize={8} fontFamily={CH} fill="#444">5000 0.38800  0000 0.38800</text>
    <polyline points={NOTCH} fill="none" stroke="#fff" strokeWidth={5} />
    <polyline points={NOTCH} fill="none" stroke="#000" strokeWidth={2.4} />

    <rect x={1324} y={71} width={40} height={600} fill="#a9a9a9" />
    <line x1={1323.5} x2={1323.5} y1={74} y2={662} stroke="#2b2b2b" />
    {AXIS.map(([s, y]) => (
      <g key={s}>
        <line x1={1323} x2={1327} y1={y} y2={y} stroke="#222" />
        <T x={1329} y={y} s={s} fill="#111" />
      </g>
    ))}
    <rect x={1325} y={295} width={33} height={11} fill="#2b2b2b" />
    <T x={1329} y={300} s="19689" fill="#fff" />
    <T x={1329} y={446} s="1.5815" />
    <T x={1329} y={534} s="1.3467" />
    <rect x={1324} y={491} width={7} height={10} fill="#222" /><T x={1325} y={496} s="0" fill="#fff" />
    <T x={1329} y={550} s="1.6223" />
    <rect x={1324} y={586} width={7} height={10} fill="#222" /><T x={1325} y={591} s="0" fill="#fff" />
    <T x={1329} y={624} s="0.4883" />
    <T x={1329} y={637} s="9.00" /><T x={1329} y={640} s="2.50" /><T x={1329} y={655} s="0.00" /><T x={1330} y={656} s="200" /><T x={1329} y={658} s="0.00" />
    {[446,534,550,624].map(y => <line key={y} x1={1323} x2={1327} y1={y} y2={y} stroke="#222" />)}

    {TIMES.map(([s, x]) => (
      <g key={s}>
        <line x1={x - 1 + 0.5} x2={x - 1 + 0.5} y1={662} y2={666} stroke="#222" />
        <T x={x} y={672} s={s} fill="#111" />
      </g>
    ))}
    <path d="M1075 75H1088L1081.500 80Z" fill="#c8c8c8" />
  </ChartSvg>
);

/* ---------- toolbar icons ---------- */
const Sv: React.FC<{ w?: number; h?: number; children: React.ReactNode }> = ({ w = 18, h = 18, children }) => (
  <svg width={w} height={h} viewBox={`0 0 ${w} ${h}`} fill="none" style={{ flex: "none" }}>{children}</svg>
);
const PlusG = ({ x = 9, y = 9 }) => <path d={`M${x + 3} ${y}h3v3h3v3h-3v3h-3v-3h-3v-3h3z`} fill="#2cb52c" stroke="#0c6e0c" strokeWidth={0.6} />;
const Axes = () => <path d="M4 1.5V15H15M2 4l2-2.5L6 4M13 13l2.500 2-2.500 2" stroke="#3a5c3a" strokeWidth={1} />;

const I: Record<string, React.ReactNode> = {
  newChart: <Sv><rect x={1.5} y={1.5} width={11} height={11} fill="#e8f0f8" stroke="#4d77a8" /><path d="M1.5 6h11M1.500 9.500h11M6 1.500v11" stroke="#7da1c8" /><PlusG x={6} y={5} /></Sv>,
  profiles: <Sv><rect x={1.5} y={1.5} width={10} height={10} fill="#dfe9f4" stroke="#4d77a8" /><rect x={5.500} y={5.500} width={11} height={10} fill="#eef4fa" stroke="#4d77a8" /><path d="M5.500 8.500h11M5.500 12h11M3 4.500h7" stroke="#7da1c8" /></Sv>,
  market: <Sv><rect x={2.5} y={1.5} width={13} height={15} rx={1} fill="#eef4fa" stroke="#8aa8c6" /><path d="M7 3l3 3.500H8V9H6V6.500H4z" fill="#2aa82a" /><path d="M10 15l-3-3.500h2V8h2v3.500h2z" fill="#e04a2a" /></Sv>,
  favorite: <Sv w={20}><path d="M1 3h6l2 2h6v8H1z" fill="#f5dd90" stroke="#b8973e" /><path d="M13 6l1.800 3.700 4 .6-2.900 2.800.7 4L13 15.300 9.400 17l.7-4-2.900-2.800 4-.6z" fill="#e8b93a" stroke="#a07b18" strokeWidth={0.7} /></Sv>,
  nav: <Sv><rect x={2.5} y={1.5} width={13} height={15} rx={1.5} fill="#fff" stroke="#3c6da6" strokeWidth={1.4} /><path d="M5 2v14" stroke="#3c6da6" strokeWidth={1.4} /><path d="M8 5h5M8 8h5M8 11h5M8 14h5" stroke="#4d77a8" /></Sv>,
  order: <Sv><path d="M2.500 1.500h7l3 3v9h-10z" fill="#fff" stroke="#6a6a6a" /><path d="M4.500 6h6M4.500 8.500h6M4.500 11h4" stroke="#6a6a6a" /><PlusG x={6} y={6} /></Sv>,
  target: <Sv><circle cx={9} cy={9} r={5.500} stroke="#777" strokeWidth={1.2} /><path d="M9 1v5M9 12v5M1 9h5M12 9h5" stroke="#777" strokeWidth={1.2} /><circle cx={9} cy={9} r={1} fill="#999" /></Sv>,
  lamp: <Sv><path d="M9 1.500l7.500 7.500L9 16.500 2 10z" fill="#d8ae4c" stroke="#8f6c1c" /><path d="M4 10l5-6 5 5" stroke="#f0d48a" /></Sv>,
  bars: <Sv><Axes /><path d="M9 4v8M7 6h2M9 10h2" stroke="#1aa01a" strokeWidth={1.4} /></Sv>,
  candle: <Sv><Axes /><path d="M10 2v12" stroke="#2a5a2a" /><rect x={7.500} y={4.500} width={5} height={7} fill="#2cb52c" stroke="#2a5a2a" /></Sv>,
  lineChart: <Sv><Axes /><path d="M5 12l3-5 3-2 3 7" stroke="#2a9a2a" strokeWidth={1.2} /></Sv>,
  zoomIn: <Sv><circle cx={7} cy={7} r={5.500} fill="#d4e8f8" stroke="#3d78b8" strokeWidth={1.4} /><path d="M4 7h6M7 4v6" stroke="#2f68a8" strokeWidth={1.4} /><path d="M11.500 11.500l5 5" stroke="#d0a838" strokeWidth={2.6} /></Sv>,
  zoomOut: <Sv><circle cx={7} cy={7} r={5.500} fill="#d4e8f8" stroke="#3d78b8" strokeWidth={1.4} /><path d="M4 7h6" stroke="#2f68a8" strokeWidth={1.4} /><path d="M11.500 11.500l5 5" stroke="#d0a838" strokeWidth={2.6} /></Sv>,
  auto: <Sv><Axes /><path d="M9 5l5 3.500L9 12z" fill="#2cb52c" stroke="#1a7a1a" strokeWidth={0.6} /></Sv>,
  shift: <Sv><Axes /><path d="M8 2v12" stroke="#446" /><path d="M15 8l-4-3v6z" fill="#e03a2a" /></Sv>,
  template: <Sv><rect x={1.5} y={2.5} width={15} height={13} fill="#fff" stroke="#4d6d92" /><rect x={2} y={3} width={14} height={2.500} fill="#3a6ea8" /><path d="M3 9l3-2 3 2 3-2 3 1" stroke="#e0662a" /><path d="M3 13l3-2 3 1 3-2 3 2" stroke="#2aa02a" /></Sv>,
  cursor: <Sv><path d="M5 1.500v13l3.200-3 2.300 5 2-1-2.300-4.800 4.300-.2z" fill="#555" stroke="#333" strokeWidth={0.6} /></Sv>,
  cross: <Sv><path d="M9 2v6M9 11v6M1 9.500h6M11 9.500h6" stroke="#666" /></Sv>,
  vline: <Sv><path d="M9.500 1v16" stroke="#444" strokeWidth={1.2} /></Sv>,
  hline: <Sv><path d="M1 9.500h15" stroke="#444" strokeWidth={1.4} /></Sv>,
  trend: <Sv><path d="M3 16L15 3" stroke="#666" strokeWidth={1.2} /></Sv>,
  equi: <Sv><path d="M2 14L12 2M5 16L15 4M3 8h10M3 11h10" stroke="#555" /><text x={12} y={18} fontSize={7} fill="#555" fontFamily={CH} fontWeight="bold">E</text></Sv>,
  fib: <Sv><path d="M3 2.500h12M3 5.500h12M3 8.500h12M3 14.500h8" stroke="#666" strokeDasharray="1 1" /><text x={12} y={18} fontSize={7} fill="#555" fontFamily={CH} fontWeight="bold">F</text></Sv>,
  A: <Sv><text x={9} y={15} textAnchor="middle" fontSize={14} fill="#555" fontFamily={CH} fontWeight="bold">A</text></Sv>,
  Tx: <Sv><rect x={2.5} y={2.5} width={13} height={13} stroke="#555" strokeDasharray="1 1" /><text x={9} y={14} textAnchor="middle" fontSize={12} fill="#444" fontFamily={CH} fontWeight="bold">T</text></Sv>,
  arc: <Sv><path d="M2 2.500h14M2 5.500h14" stroke="#666" strokeDasharray="1 1" /><path d="M3 16c1-5 4-7 9-7" stroke="#666" /><text x={12} y={18} fontSize={7} fill="#555" fontFamily={CH} fontWeight="bold">F</text></Sv>,
  time: <Sv><path d="M3.500 2v13M6.500 2v13M9.500 2v13M13.500 2v13" stroke="#666" strokeDasharray="1 1" /><text x={11} y={18} fontSize={7} fill="#555" fontFamily={CH} fontWeight="bold">F</text></Sv>,
  rectS: <Sv><rect x={2} y={3.500} width={13} height={11} rx={1.5} fill="#808080" stroke="#666" /></Sv>,
  chan: <Sv><path d="M2 14L10 4M5 16L14 5M8 17L16 8" stroke="#777" strokeWidth={1.2} strokeDasharray="2 1" /></Sv>,
  ellipseS: <Sv><ellipse cx={9} cy={9} rx={8} ry={6} fill="#808080" stroke="#666" /></Sv>,
  gann: <Sv><path d="M2 16L15 2M2 16L16 5M2 16L17 9M2 16L17 13M2 16L10 2" stroke="#777" strokeDasharray="2 1" /></Sv>,
  arrows: <Sv><path d="M3 4l3-3 3 3zM3 7h6l-3 3z" fill="#333" /><path d="M9 12l3.500-3.500 3.500 3.500-3.500 3.500z" fill="#333" /><path d="M7 7l3 3" stroke="#2a8a2a" /></Sv>,
  search: <Sv><circle cx={11} cy={6.500} r={4.500} stroke="#2f6fc0" strokeWidth={2} fill="#e8f2fc" /><path d="M8 10l-5 6" stroke="#2f6fc0" strokeWidth={2.600} /></Sv>,
  chat: <Sv w={24}><ellipse cx={15} cy={7} rx={8} ry={5.500} fill="#eee" stroke="#9a9a9a" /><ellipse cx={8} cy={11} rx={7} ry={5} fill="#e8e8e8" stroke="#9a9a9a" /><path d="M5 15l-1 3 4-2" fill="#e8e8e8" stroke="#9a9a9a" /></Sv>,
};
const appIcon = (
  <svg width={14} height={17} viewBox="0 0 14 17" fill="none"><path d="M.5.500h9l4 4v12H.5z" fill="#e3eefa" stroke="#7ba0c8" /><path d="M2 9l2 3 2-5 2 4 2-3 2 2" stroke="#4d8acb" /><path d="M2 4h5" stroke="#4d8acb" /></svg>
);

const MENU = ["File", "Visualizza", "Inserisci", "Grafici", "Strumenti", "Finestra", "Aiuto"];
const TABS = ["IT40Cash,Daily","IT40Cash,H1","IT40Cash,H1","IT40Cash,H4","EU50Cash,Daily","EU50Cash,H4","EU50Cash,Daily","EU50Cash,H1","EU50Cash,H1","EU50Cash,H1","JP225Cash,H4","JP225Cash,H4","HK50Cash,H4"];
const DRAW = ["vline","hline","trend","equi","fib","A","Tx","arc","time","rectS","chan","ellipseS","gann"];
const PERIODS: [string, number, boolean?][] = [["M5",28],["M15",28],["M30",28],["H1",28,true],["H4",28],["D1",28],["W1",28],["M",20]];
const CELLS = [116, 102, 71, 71, 68, 70, 67];

export default function App() {
  return (
    <Shell>
      <Global />
      <TitleBar>
        <Logo>XM</Logo>
        <TitleText>9063893: Trading.com-Demo 2 - Conto dimostrativo (demo) - [IT40Cash,H1]</TitleText>
        <WinBtn><svg width={11} height={11}><path d="M0 5.500h10" stroke="#fff" /></svg></WinBtn>
        <WinBtn><svg width={11} height={11}><path d="M.5 2.500h8v8h-8zM2.500 2.500v-2h8v8h-2" stroke="#fff" fill="none" /></svg></WinBtn>
        <WinBtn><svg width={12} height={12}><path d="M1 1l10 10M11 1L1 11" stroke="#fff" /></svg></WinBtn>
      </TitleBar>
      <MenuBar>
        {appIcon}
        <MenuItems>{MENU.map(m => <div key={m}>{m}</div>)}</MenuItems>
        <MdiBtns>
          <MdiBtn><svg width={9} height={9}><path d="M1 7.500h6" stroke="#555" strokeWidth={2} /></svg></MdiBtn>
          <MdiBtn><svg width={10} height={10}><path d="M.5 3.500h6v6h-6zM3.500 3V.5h6v6H7" stroke="#555" fill="none" /></svg></MdiBtn>
          <MdiBtn><svg width={9} height={9}><path d="M1 1l7 7M8 1L1 8" stroke="#555" strokeWidth={1.8} /></svg></MdiBtn>
        </MdiBtns>
      </MenuBar>
      <ToolBar>
        <Grip />
        <Tool $w={36}>{I.newChart}<Caret /></Tool>
        <Tool $w={40}>{I.profiles}<Caret /></Tool>
        <Sep $ml={0} $mr={5} />
        <Tool $w={28}>{I.market}</Tool>
        <Tool $w={28}>{I.favorite}</Tool>
        <Tool $w={28}>{I.nav}</Tool>
        <Sep $ml={4} $mr={8} />
        <OrderBtn $w={101}>{I.order}Nuovo ordine</OrderBtn>
        <Tool $w={28}>{I.target}</Tool>
        <Tool $w={28}>{I.lamp}</Tool>
        <Grip $ml={3} />
        <Tool $w={28} $ml={3}>{I.bars}</Tool>
        <Tool $w={28} $active>{I.candle}</Tool>
        <Tool $w={28}>{I.lineChart}</Tool>
        <Sep $ml={3} $mr={2} />
        <Tool $w={28}>{I.zoomIn}</Tool>
        <Tool $w={28}>{I.zoomOut}</Tool>
        <Sep $ml={4} $mr={4} />
        <Tool $w={28}>{I.auto}</Tool>
        <Tool $w={28} $active>{I.shift}</Tool>
        <Sep $ml={4} $mr={4} />
        <Tool $w={36}>{I.template}<Caret /></Tool>
        <Grip $ml={6} />
        <Tool $w={28} $ml={1} $active>{I.cursor}</Tool>
        <Tool $w={28}>{I.cross}</Tool>
        <Sep $ml={6} $mr={3} />
        {DRAW.map(d => <Tool key={d} $w={28}>{I[d]}</Tool>)}
        <Tool $w={36}>{I.arrows}<Caret /></Tool>
        <Sep $ml={1} $mr={2} />
        <Grip />
        {PERIODS.map(([p, w, a]) => <Period key={p} $w={w} $active={a}>{p}</Period>)}
        <Tool $w={26}>{I.search}</Tool>
        <Tool $w={28} $ml={3}>{I.chat}</Tool>
      </ToolBar>
      <ChartArea><Chart /></ChartArea>
      <TabBar>
        <ActiveTab>IT40Cash,H1</ActiveTab>
        {TABS.map((t, i) => <Tab key={i}>{t}</Tab>)}
        <TabArrows><TabArrow $dir="left" /><TabArrow $dir="right" $on /></TabArrows>
      </TabBar>
      <StatusBar>
        <HelpCell $w={672}>Per aiuto, premi F1</HelpCell>
        {CELLS.map((w, i) => <Cell key={i} $w={w}>{i === 0 ? "Default" : ""}</Cell>)}
        <Cell $w={129}>
          <svg width={24} height={14} viewBox="0 0 24 14">
            {Array.from({ length: 8 }, (_, i) => (
              <g key={i}>
                <rect x={i * 3} y={0} width={2} height={7 - i * 0.4} fill="#7c8c10" />
                <rect x={i * 3} y={7} width={2} height={7} fill="#0e4a6e" />
              </g>
            ))}
          </svg>
          1002/1 kb
        </Cell>
      </StatusBar>
      <Dialog>
        <DlgTitle>
          <QMark>?</QMark>
          <svg width={12} height={12}><path d="M.5.500l11 11M11.500.500l-11 11" stroke="#8a8a8a" /></svg>
        </DlgTitle>
        <DlgText>
          <span>signal240</span>
          <MiniScroll>
            <svg width={9} height={6}><path d="M1 5l3.500-3.500L8 5" stroke="#c0c0c0" strokeWidth={2} fill="none" /></svg>
            <svg width={9} height={6}><path d="M1 1l3.500 3.500L8 1" stroke="#c0c0c0" strokeWidth={2} fill="none" /></svg>
          </MiniScroll>
        </DlgText>
        <ListBox>
          <Rows>
            <Row $alt>hSell signal240</Row>
            <Row $shift={0}>5Cash at 19:03:32 crossed -0.05 line down</Row>
            <Row $alt>LL - EU50Cash MN at 20:03:28</Row>
            <Row $shift={2}>Turning Point LONG [43200] at EU50Ca…</Row>
          </Rows>
          <ListScroll>
            <Thumb />
            <svg width={9} height={6}><path d="M1 5l3.500-3.500L8 5" stroke="#333" strokeWidth={2} fill="none" /></svg>
            <svg width={9} height={6}><path d="M1 1l3.500 3.500L8 1" stroke="#333" strokeWidth={2} fill="none" /></svg>
          </ListScroll>
        </ListBox>
        <OkButton>OK</OkButton>
      </Dialog>
    </Shell>
  );
}
